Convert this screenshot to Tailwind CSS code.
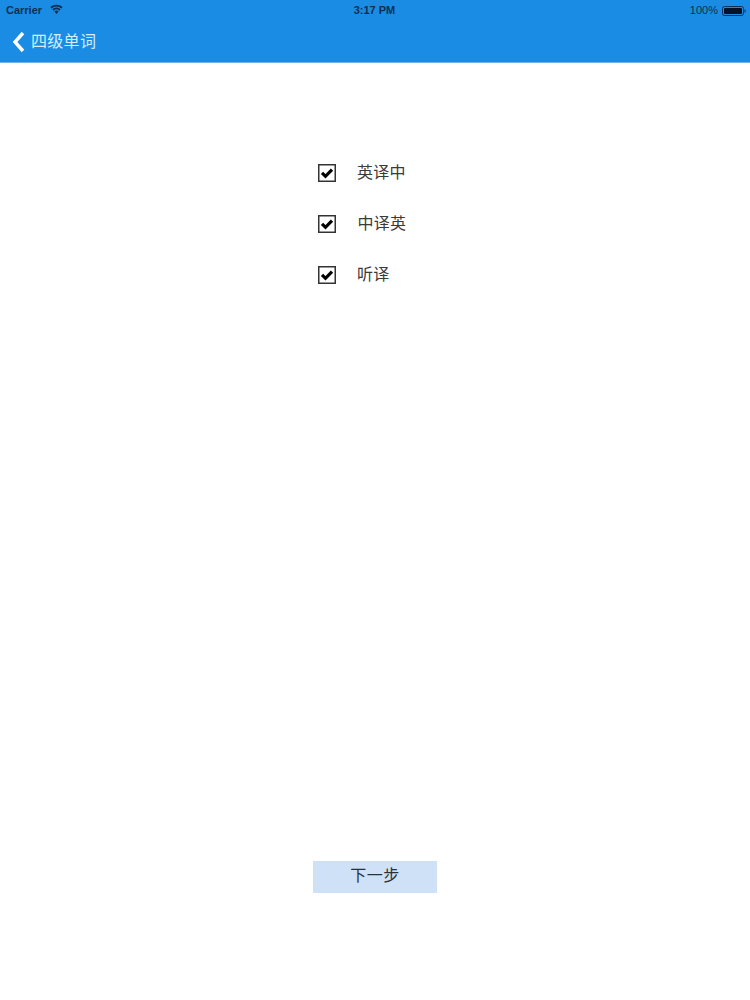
<!DOCTYPE html>
<html lang="zh">
<head>
    <meta charset="UTF-8">
    <title>四级单词</title>
    <script src="https://cdn.jsdelivr.net/npm/@tailwindcss/browser@4"></script>
</head>
<body class="bg-white w-[750px] h-[1000px] overflow-hidden flex flex-col font-['Liberation_Sans','Noto_Sans_CJK_SC',sans-serif]">
    <!-- Header -->
    <header class="bg-[#1a8ce4] h-[63px] border-b border-[#6fb3e8] shrink-0">
        <div class="h-[21px] grid grid-cols-3 items-center px-[6px] text-[11px] font-bold text-[#0c2f55]">
            <div class="flex items-center gap-[8px]">
                <span>Carrier</span>
                <svg width="13" height="10" viewBox="0 0 13 10" fill="none" stroke="#0c2f55" stroke-width="1.9" class="-mt-[3px]">
                    <path d="M1 3.8 A8 8 0 0 1 12 3.8"/>
                    <path d="M3 6 A5 5 0 0 1 10 6"/>
                    <path d="M6.5 10 L4.4 7.6 A3 3 0 0 1 8.6 7.6 Z" fill="#0c2f55" stroke="none"/>
                </svg>
            </div>
            <div class="text-center pr-[1px]">3:17 PM</div>
            <div class="flex items-center justify-end gap-[4px] -mr-[2px]">
                <span class="font-normal">100%</span>
                <svg width="24" height="10" viewBox="0 0 24 10">
                    <rect x="0.5" y="0.5" width="21" height="9" rx="2" fill="none" stroke="#0c2f55"/>
                    <rect x="2" y="2" width="18" height="6" rx="1" fill="#06122b"/>
                    <rect x="22.5" y="3.5" width="1" height="3" fill="#0c2f55"/>
                </svg>
            </div>
        </div>
        <div class="h-[41px] flex items-center pl-[12px]">
            <svg width="13" height="22" viewBox="0 0 13 22" fill="none" stroke="#ffffff" stroke-width="3.4">
                <path d="M11 2 L3 11 L11 20"/>
            </svg>
            <span class="ml-[6px] text-[16px] leading-none tracking-[0.3px] text-[#d5ecfb]">四级单词</span>
        </div>
    </header>

    <!-- Options -->
    <main class="flex-1 flex flex-col items-center">
        <div class="mt-[98px] flex flex-col gap-[27px] w-[114px] text-[16px] leading-[24px] tracking-[0.2px] text-[#3a3a3a]">
            <label class="flex items-center h-[24px]">
                <svg width="18" height="18" viewBox="0 0 18 18" class="shrink-0">
                    <rect x="0.75" y="0.75" width="16.5" height="16.5" fill="#fff" stroke="#333" stroke-width="1.5"/>
                    <path d="M4 8.8 L7.5 12.3 L14 5.6" fill="none" stroke="#000" stroke-width="3.2"/>
                </svg>
                <span class="ml-[21px]">英译中</span>
            </label>
            <label class="flex items-center h-[24px]">
                <svg width="18" height="18" viewBox="0 0 18 18" class="shrink-0">
                    <rect x="0.75" y="0.75" width="16.5" height="16.5" fill="#fff" stroke="#333" stroke-width="1.5"/>
                    <path d="M4 8.8 L7.5 12.3 L14 5.6" fill="none" stroke="#000" stroke-width="3.2"/>
                </svg>
                <span class="ml-[21.5px]">中译英</span>
            </label>
            <label class="flex items-center h-[24px]">
                <svg width="18" height="18" viewBox="0 0 18 18" class="shrink-0">
                    <rect x="0.75" y="0.75" width="16.5" height="16.5" fill="#fff" stroke="#333" stroke-width="1.5"/>
                    <path d="M4 8.8 L7.5 12.3 L14 5.6" fill="none" stroke="#000" stroke-width="3.2"/>
                </svg>
                <span class="ml-[21px]">听译</span>
            </label>
        </div>

        <button class="mt-[574px] w-[124px] h-[32px] pb-[2px] bg-[#cfe1f6] text-[16px] tracking-[0.5px] text-[#2b3138]">下一步</button>
    </main>
</body>
</html>
